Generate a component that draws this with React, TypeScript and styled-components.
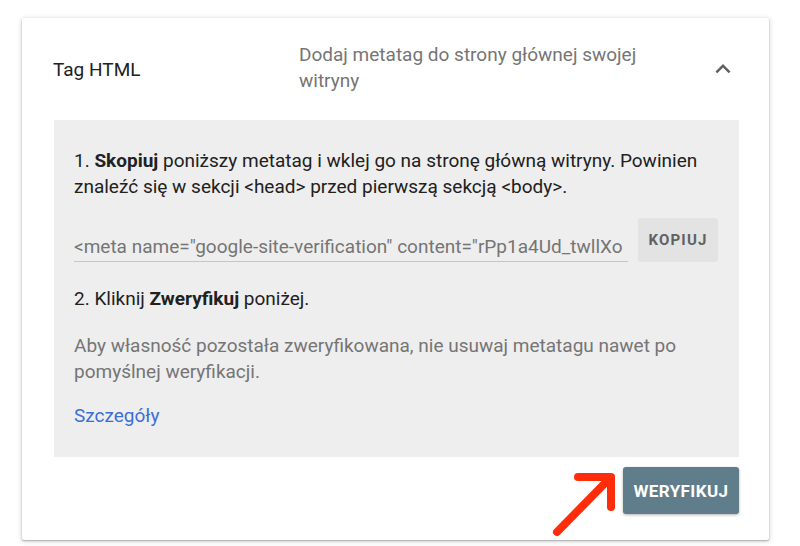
import React from "react";
import styled, { createGlobalStyle } from "styled-components";

const Global = createGlobalStyle`
  html, body { margin: 0; padding: 0; background: #ffffff; }
  body { font-family: Roboto, "Noto Sans", Arial, sans-serif; -webkit-font-smoothing: antialiased; }
  * { box-sizing: border-box; }
`;

const Page = styled.div`
  width: 800px;
  height: 546px;
  padding: 18px 0 0 22px;
`;

const Card = styled.div`
  width: 747px;
  height: 522px;
  background: #fff;
  border-radius: 2px;
  box-shadow: 0 1px 2px rgba(0, 0, 0, 0.28), 0 1px 5px 1px rgba(0, 0, 0, 0.12);
  display: flex;
  flex-direction: column;
`;

const Header = styled.div`
  height: 102px;
  display: flex;
  align-items: center;
  padding: 0 30px 0 31px;
`;

const Title = styled.div`
  width: 246px;
  font-size: 19px;
  color: #212121;
`;

const Desc = styled.div`
  width: 370px;
  font-size: 19px;
  line-height: 26px;
  color: #757575;
  margin-top: -2px;
`;

const ChevronBtn = styled.div`
  margin-left: auto;
  width: 40px;
  display: flex;
  justify-content: center;
  margin-right: -4px;
`;

const Panel = styled.div`
  margin: 0 30px 0 32px;
  background: #eeeeee;
  padding: 28px 20px 28px 20px;
  display: flex;
  flex-direction: column;
`;

const Text = styled.p<{ $muted?: boolean; $gap?: number }>`
  margin: ${(p) => p.$gap ?? 0}px 0 0 0;
  font-size: 19px;
  line-height: 26px;
  color: ${(p) => (p.$muted ? "#757575" : "#212121")};
  b { font-weight: 700; }
`;

const CopyRow = styled.div`
  margin-top: 18px;
  display: flex;
  align-items: flex-start;
  gap: 10px;
`;

const Field = styled.div`
  width: 554px;
  height: 44px;
  border-bottom: 1px solid #c6c6c6;
  overflow: hidden;
  white-space: nowrap;
  font-size: 19px;
  color: #757575;
  padding-top: 16px;
  line-height: 26px;
`;

const CopyButton = styled.button`
  width: 80px;
  height: 44px;
  border: none;
  border-radius: 3px;
  background: #e3e3e3;
  color: #616161;
  font-family: Roboto, Arial, sans-serif;
  font-size: 15px;
  font-weight: 700;
  letter-spacing: 1.2px;
  padding: 0;
`;

const Link = styled.a`
  margin-top: 18px;
  font-size: 19px;
  line-height: 26px;
  color: #3b6fd8;
  text-decoration: none;
`;

const Footer = styled.div`
  position: relative;
  display: flex;
  justify-content: flex-end;
  padding: 10px 30px 0 0;
`;

const VerifyButton = styled.button`
  width: 116px;
  height: 47px;
  border: none;
  border-radius: 3px;
  background: #607d8b;
  color: #ffffff;
  font-family: Roboto, Arial, sans-serif;
  font-size: 17px;
  font-weight: 700;
  letter-spacing: 0.4px;
  padding: 0;
  box-shadow: 0 1px 3px rgba(0, 0, 0, 0.3);
`;

const Arrow = styled.svg`
  position: absolute;
  left: 520px;
  top: 0;
  overflow: visible;
`;

export default function App() {
  return (
    <>
      <Global />
      <Page>
        <Card>
          <Header>
            <Title>Tag HTML</Title>
            <Desc>Dodaj metatag do strony głównej swojej witryny</Desc>
            <ChevronBtn>
              <svg width="30" height="30" viewBox="0 0 24 24">
                <path d="M7.41 15.41 12 10.83l4.59 4.58L18 14l-6-6-6 6z" fill="#5f5f5f" />
              </svg>
            </ChevronBtn>
          </Header>
          <Panel>
            <Text>
              1. <b>Skopiuj</b> poniższy metatag i wklej go na stronę główną witryny. Powinien
              znaleźć się w sekcji &lt;head&gt; przed pierwszą sekcją &lt;body&gt;.
            </Text>
            <CopyRow>
              <Field>&lt;meta name="google-site-verification" content="rPp1a4Ud_twllXo</Field>
              <CopyButton>KOPIUJ</CopyButton>
            </CopyRow>
            <Text $gap={24}>
              2. Kliknij <b>Zweryfikuj</b> poniżej.
            </Text>
            <Text $muted $gap={21}>
              Aby własność pozostała zweryfikowana, nie usuwaj metatagu nawet po pomyślnej
              weryfikacji.
            </Text>
            <Link href="#">Szczegóły</Link>
          </Panel>
          <Footer>
            <Arrow width="70" height="70" viewBox="0 0 70 70">
              <path
                d="M15 75 L68 21 M36 20 L69 20 L69 50"
                fill="none"
                stroke="#ff2d0a"
                strokeWidth="8"
                strokeLinecap="round"
                strokeLinejoin="round"
              />
            </Arrow>
            <VerifyButton>WERYFIKUJ</VerifyButton>
          </Footer>
        </Card>
      </Page>
    </>
  );
}
